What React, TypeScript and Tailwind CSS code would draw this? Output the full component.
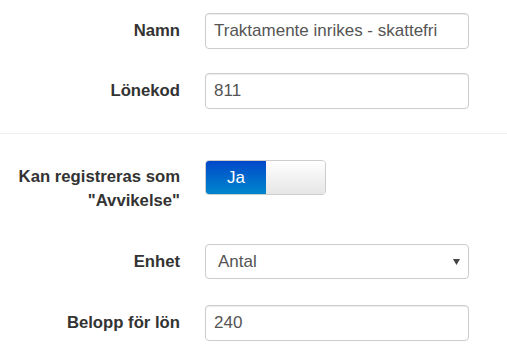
export default function App() {
  const labelCls =
    "w-[180px] shrink-0 text-right text-[16.7px] font-bold text-[#333]";
  const inputCls =
    "w-[264px] h-[36px] rounded-[4px] border border-[#ccc] bg-white px-[8px] text-[17px] text-[#555] shadow-[inset_0_1px_1px_rgba(0,0,0,0.075)] outline-none";

  return (
    <div className="w-[507px] h-[357px] bg-white overflow-hidden font-['Liberation_Sans',Arial,sans-serif]">
      {/* Namn */}
      <div className="flex items-center gap-[25px] pt-[13px]">
        <label className={labelCls}>Namn</label>
        <input className={inputCls} defaultValue="Traktamente inrikes - skattefri" />
      </div>

      {/* Lönekod */}
      <div className="flex items-center gap-[25px] mt-[24px]">
        <label className={labelCls}>Lönekod</label>
        <input className={inputCls} defaultValue="811" />
      </div>

      <div className="mt-[24px] border-t border-[#eee]" />

      {/* Avvikelse */}
      <div className="flex items-start gap-[25px] mt-[26px]">
        <label className={labelCls + " leading-[24px] pt-[5px]"}>
          Kan registreras som
          <br />
          "Avvikelse"
        </label>
        <div className="flex w-[121px] h-[35px] rounded-[4px] border border-[#ccc] overflow-hidden">
          <div className="w-[60px] flex items-center justify-center bg-gradient-to-b from-[#0046c9] to-[#0086cc] text-white text-[17px]">
            Ja
          </div>
          <div className="flex-1 bg-gradient-to-b from-white to-[#e6e6e6]" />
        </div>
      </div>

      {/* Enhet */}
      <div className="flex items-center gap-[25px] mt-[31px]">
        <label className={labelCls}>Enhet</label>
        <div className="relative w-[264px] h-[35px] rounded-[4px] border border-[#ccc] bg-white flex items-center pl-[12px] text-[17px] text-[#555]">
          Antal
          <svg
            className="absolute right-[8px] top-1/2 -translate-y-1/2"
            width="7"
            height="6"
            viewBox="0 0 7 6"
          >
            <path d="M0 0h7L3.5 6z" fill="#444" />
          </svg>
        </div>
      </div>

      {/* Belopp för lön */}
      <div className="flex items-center gap-[25px] mt-[26px]">
        <label className={labelCls}>Belopp för lön</label>
        <input className={inputCls + " h-[35px]"} defaultValue="240" />
      </div>
    </div>
  );
}
